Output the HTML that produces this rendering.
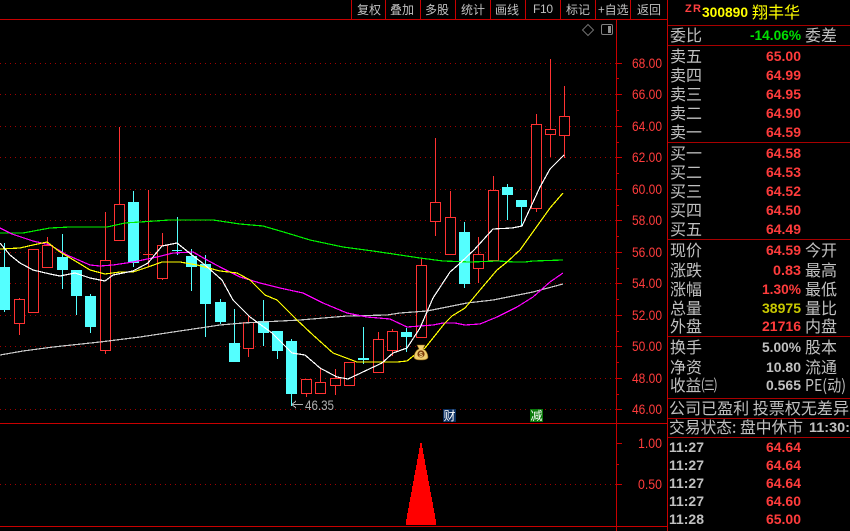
<!DOCTYPE html>
<html><head><meta charset="utf-8"><style>
html,body{margin:0;padding:0;background:#000;width:850px;height:531px;overflow:hidden}
svg{display:block}
.c{font-family:"WenQuanYi Zen Hei","Noto Sans CJK SC",sans-serif;fill:#c0c0c0}
.t{font-size:12px}
.p{font-size:16px}
.n{font-family:"Liberation Sans",sans-serif;font-weight:bold;font-size:14px;fill:#ff3c3c}
.g{fill:#c0c0c0}
.a{font-family:"Liberation Sans",sans-serif;font-size:14px;fill:#ff3c3c}
</style></head><body>
<svg width="850" height="531" viewBox="0 0 850 531" xmlns="http://www.w3.org/2000/svg">
<rect width="850" height="531" fill="#000"/>
<!-- dotted grid -->
<g stroke="#a00000" stroke-width="1" stroke-dasharray="1 4" shape-rendering="crispEdges">
<path d="M0 63.5H616M0 94.5H616M0 126.5H616M0 157.5H616M0 189.5H616M0 220.5H616M0 252.5H616M0 283.5H616M0 315.5H616M0 346.5H616M0 378.5H616M0 409.5H616M0 484.5H616"/>
</g>
<!-- candles -->
<g shape-rendering="crispEdges">
<path fill="none" stroke="#ff3232" d="M19.5 298V335M33.5 249V312M47.5 237V268M105.5 212V354M119.5 127V240M148.5 190V267M143 254.5H153M162.5 233V280M248.5 315V357M306.5 379V397M320.5 369V393M335.5 369V395M349.5 362V386M378.5 332V373M392.5 329V356M421.5 258V337M435.5 138V236M450.5 191V254M478.5 237V283M493.5 176V260M536.5 114V212M550.5 59V157M564.5 86V158"/>
<path fill="#000" stroke="#ff3232" d="M14.5 299.5h10V323.5h-10zM28.5 249.5h10V312.5h-10zM42.5 245.5h10V267.5h-10zM100.5 260.5h10V350.5h-10zM114.5 204.5h10V240.5h-10zM157.5 245.5h10V278.5h-10zM243.5 322.5h10V348.5h-10zM301.5 379.5h10V393.5h-10zM315.5 382.5h10V393.5h-10zM330.5 378.5h10V385.5h-10zM344.5 362.5h10V385.5h-10zM373.5 339.5h10V372.5h-10zM387.5 331.5h10V350.5h-10zM416.5 265.5h10V337.5h-10zM430.5 202.5h10V221.5h-10zM445.5 217.5h10V254.5h-10zM473.5 254.5h10V268.5h-10zM488.5 190.5h10V260.5h-10zM531.5 124.5h10V208.5h-10zM545.5 129.5h10V134.5h-10zM559.5 116.5h10V135.5h-10z"/>
<path fill="none" stroke="#54ffff" d="M4.5 243V312M62.5 234V289M76.5 270V315M90.5 294V333M133.5 191V267M177.5 217V255M172 250.5H182M191.5 249V291M205.5 255V337M220.5 299V324M234.5 309V343M263.5 300V346M277.5 331V359M291.5 339V406M363.5 327V364M406.5 328V352M464.5 222V288M507.5 184V220M521.5 200V226"/>
<path fill="#54ffff" d="M-1 267h11v43h-11zM57 257h11v13h-11zM71 270h11v26h-11zM85 296h11v31h-11zM128 202h11v61h-11zM186 256h11v11h-11zM200 264h11v40h-11zM215 302h11v20h-11zM229 343h11v19h-11zM258 321h11v12h-11zM272 331h11v20h-11zM286 341h11v53h-11zM358 358h11v2h-11zM401 332h11v5h-11zM459 232h11v52h-11zM502 187h11v8h-11zM516 200h11v7h-11z"/>
</g>
<!-- moving averages -->
<g fill="none" stroke-width="1.2" shape-rendering="crispEdges">
<polyline stroke="#c8c8c8" points="0,355 23,351 53,347 100,342 140,337 173,332 200,328 220,325 243,323 300,320 347,316 387,315 400,313 427,311 467,303 493,300 533,292 563,284"/>
<polyline stroke="#00f000" points="0,233 23,233 50,228 70,227 107,227 125,223 155,221 170,220 213,220 240,224 263,226 287,233 310,240 343,247 373,251 400,255 420,258 443,261 470,262 497,261 515,262 525,262 533,261 563,260"/>
<polyline stroke="#ff00ff" points="0,228 12,234 33,241 50,245 67,255 90,265 100,266 113,265 133,262 157,257 173,253 193,252 207,260 220,267 240,277 260,283 280,288 303,293 323,303 347,313 367,317 390,319 407,327 433,325 443,323 455,323 465,325 480,324 497,317 517,307 533,297 550,282 563,273"/>
<polyline stroke="#ffff00" points="0,249 20,248 33,245 47,242 60,252 77,262 90,270 105,274 120,272 133,272 148,267 162,262 180,262 197,265 220,271 237,273 250,280 265,295 277,300 297,320 313,335 333,353 357,362 397,362 407,361 417,353 425,348 445,323 452,316 465,308 480,290 497,270 507,262 520,250 550,208 563,193"/>
<polyline stroke="#ffffff" points="0,243 10,255 20,263 33,270 50,274 60,276 75,273 90,278 105,281 113,275 133,271 148,263 162,246 177,243 192,255 205,265 222,280 233,300 250,317 272,333 292,353 305,355 320,368 337,377 348,379 382,363 393,353 407,348 420,328 433,298 450,272 458,265 474,250 493,229 512,228 522,226 540,187 550,169 564,155"/>
</g>
<!-- low marker -->
<path d="M292 404.5H303M292 404.5L296 401M292 404.5L296 408" stroke="#b0b0b0" fill="none" shape-rendering="crispEdges"/>
<text class="a" x="305" y="410" textLength="29" lengthAdjust="spacingAndGlyphs" style="fill:#b0b0b0">46.35</text>
<!-- money bag -->
<path d="M417 345h8l-2 4c3 1 5 5 5 8 0 2-2 3-7 3s-7-1-7-3c0-3 2-7 5-8z" fill="#f0cf70" stroke="#8a6010" stroke-width=".6"/>
<circle cx="421" cy="354" r="3.6" fill="#7a3a08"/>
<text x="421" y="357" text-anchor="middle" font-family="Liberation Sans,sans-serif" font-size="7" font-weight="bold" fill="#f5d98a">$</text>
<!-- markers -->
<rect x="443" y="409" width="13" height="13" fill="#0c3060"/>
<text class="c" x="443.5" y="420" font-size="12" style="fill:#fff">财</text>
<rect x="530" y="409" width="13" height="13" fill="#0a7a0a"/>
<text class="c" x="530.5" y="420" font-size="12" style="fill:#fff">减</text>
<!-- icons top -->
<path d="M588 24.5L593.5 30 588 35.5 582.5 30z" fill="none" stroke="#707070"/>
<rect x="601.5" y="24.5" width="11" height="10" rx="1.5" fill="#000" stroke="#808080"/>
<rect x="608" y="26" width="3" height="7" fill="#909090" shape-rendering="crispEdges"/>
<!-- frame lines -->
<g stroke="#c80000" shape-rendering="crispEdges" fill="none">
<path d="M0 19.5H667M351.5 0V19M385.5 0V19M420.5 0V19M455.5 0V19M490.5 0V19M525.5 0V19M560.5 0V19M595.5 0V19M630.5 0V19"/>
<path d="M616.5 19V531M667.5 0V531M0 423.5H667M0 526.5H667"/>
<path d="M616 63.5h6M616 94.5h6M616 126.5h6M616 157.5h6M616 189.5h6M616 220.5h6M616 252.5h6M616 283.5h6M616 315.5h6M616 346.5h6M616 378.5h6M616 409.5h6M616 443.5h6M616 484.5h6M616 78.5h3M616 110.5h3M616 142.5h3M616 173.5h3M616 205.5h3M616 236.5h3M616 268.5h3M616 299.5h3M616 331.5h3M616 362.5h3M616 394.5h3M616 464.5h3"/>
<path d="M668 25.5H850M668 45.5H850M668 142.5H850M668 239.5H850M668 336.5H850M668 398.5H850M668 418.5H850M668 437.5H850" stroke="#a80000"/>
</g>
<!-- toolbar -->
<g class="c t">
<text x="357" y="14">复权</text><text x="390" y="14">叠加</text><text x="425" y="14">多股</text><text x="461" y="14">统计</text><text x="495" y="14">画线</text>
<text x="533" y="13" style="font-family:'Liberation Sans',sans-serif" textLength="20">F10</text>
<text x="566" y="14">标记</text><text x="598" y="14">+自选</text><text x="637" y="14">返回</text>
</g>
<!-- axis labels -->
<g class="a">
<text x="632" y="68" textLength="30" lengthAdjust="spacingAndGlyphs">68.00</text>
<text x="632" y="99" textLength="30" lengthAdjust="spacingAndGlyphs">66.00</text>
<text x="632" y="131" textLength="30" lengthAdjust="spacingAndGlyphs">64.00</text>
<text x="632" y="162" textLength="30" lengthAdjust="spacingAndGlyphs">62.00</text>
<text x="632" y="194" textLength="30" lengthAdjust="spacingAndGlyphs">60.00</text>
<text x="632" y="225" textLength="30" lengthAdjust="spacingAndGlyphs">58.00</text>
<text x="632" y="257" textLength="30" lengthAdjust="spacingAndGlyphs">56.00</text>
<text x="632" y="288" textLength="30" lengthAdjust="spacingAndGlyphs">54.00</text>
<text x="632" y="320" textLength="30" lengthAdjust="spacingAndGlyphs">52.00</text>
<text x="632" y="351" textLength="30" lengthAdjust="spacingAndGlyphs">50.00</text>
<text x="632" y="383" textLength="30" lengthAdjust="spacingAndGlyphs">48.00</text>
<text x="632" y="414" textLength="30" lengthAdjust="spacingAndGlyphs">46.00</text>
<text x="638" y="448" textLength="24" lengthAdjust="spacingAndGlyphs">1.00</text>
<text x="638" y="489" textLength="24" lengthAdjust="spacingAndGlyphs">0.50</text>
</g>
<!-- volume triangle -->
<polygon fill="#ff0000" shape-rendering="crispEdges" points="421,443 422,443 422,448 423,448 423,454 424,454 424,459 425,459 425,465 426,465 426,470 427,470 427,475 428,475 428,481 429,481 429,486 430,486 430,492 431,492 431,497 432,497 432,502 433,502 433,508 434,508 434,513 435,513 435,519 436,519 436,525 406,525 406,519 407,519 407,513 408,513 408,508 409,508 409,502 410,502 410,497 411,497 411,492 412,492 412,486 413,486 413,481 414,481 414,475 415,475 415,470 416,470 416,465 417,465 417,459 418,459 418,454 419,454 419,448 420,448 420,443"/>
<!-- header panel -->
<text x="685" y="12" font-family="Liberation Sans,sans-serif" font-size="11" font-weight="bold" fill="#ff4040" textLength="16">ZR</text>
<text x="702" y="17" font-family="Liberation Sans,sans-serif" font-size="14" font-weight="bold" fill="#ffff00" textLength="46" lengthAdjust="spacingAndGlyphs">300890</text>
<text class="c p" x="752" y="18" style="fill:#ffff00">翔丰华</text>
<!-- panel labels -->
<g class="c p">
<text x="670" y="41">委比</text><text x="805" y="41">委差</text>
<text x="670" y="62">卖五</text><text x="670" y="81">卖四</text><text x="670" y="100">卖三</text><text x="670" y="119">卖二</text><text x="670" y="138">卖一</text>
<text x="670" y="159">买一</text><text x="670" y="178">买二</text><text x="670" y="197">买三</text><text x="670" y="216">买四</text><text x="670" y="235">买五</text>
<text x="670" y="256">现价</text><text x="805" y="256">今开</text>
<text x="670" y="276">涨跌</text><text x="805" y="276">最高</text>
<text x="670" y="295">涨幅</text><text x="805" y="295">最低</text>
<text x="670" y="314">总量</text><text x="805" y="314">量比</text>
<text x="670" y="332">外盘</text><text x="805" y="332">内盘</text>
<text x="670" y="353">换手</text><text x="805" y="353">股本</text>
<text x="670" y="373">净资</text><text x="805" y="373">流通</text>
<text x="670" y="391" textLength="47" lengthAdjust="spacingAndGlyphs">收益㈢</text><text x="805" y="391" textLength="41" lengthAdjust="spacingAndGlyphs">PE(动)</text>
<text x="669" y="414" textLength="180" lengthAdjust="spacingAndGlyphs">公司已盈利 投票权无差异</text>
<text x="669" y="433" textLength="134" lengthAdjust="spacingAndGlyphs">交易状态: 盘中休市</text>
</g>
<!-- panel numbers -->
<g class="n">
<text x="750" y="40" textLength="51" lengthAdjust="spacingAndGlyphs" style="fill:#00e000">-14.06%</text>
<text x="766" y="61" textLength="35" lengthAdjust="spacingAndGlyphs">65.00</text>
<text x="766" y="80" textLength="35" lengthAdjust="spacingAndGlyphs">64.99</text>
<text x="766" y="99" textLength="35" lengthAdjust="spacingAndGlyphs">64.95</text>
<text x="766" y="118" textLength="35" lengthAdjust="spacingAndGlyphs">64.90</text>
<text x="766" y="137" textLength="35" lengthAdjust="spacingAndGlyphs">64.59</text>
<text x="766" y="158" textLength="35" lengthAdjust="spacingAndGlyphs">64.58</text>
<text x="766" y="177" textLength="35" lengthAdjust="spacingAndGlyphs">64.53</text>
<text x="766" y="196" textLength="35" lengthAdjust="spacingAndGlyphs">64.52</text>
<text x="766" y="215" textLength="35" lengthAdjust="spacingAndGlyphs">64.50</text>
<text x="766" y="234" textLength="35" lengthAdjust="spacingAndGlyphs">64.49</text>
<text x="766" y="255" textLength="35" lengthAdjust="spacingAndGlyphs">64.59</text>
<text x="773" y="275" textLength="28" lengthAdjust="spacingAndGlyphs">0.83</text>
<text x="762" y="294" textLength="39" lengthAdjust="spacingAndGlyphs">1.30%</text>
<text x="762" y="313" textLength="39" lengthAdjust="spacingAndGlyphs" style="fill:#c8c800">38975</text>
<text x="762" y="331" textLength="39" lengthAdjust="spacingAndGlyphs">21716</text>
<text x="762" y="352" textLength="39" lengthAdjust="spacingAndGlyphs" style="fill:#c0c0c0">5.00%</text>
<text x="766" y="372" textLength="35" lengthAdjust="spacingAndGlyphs" style="fill:#c0c0c0">10.80</text>
<text x="766" y="390" textLength="35" lengthAdjust="spacingAndGlyphs" style="fill:#c0c0c0">0.565</text>
<text x="809" y="432" textLength="41" lengthAdjust="spacingAndGlyphs" style="fill:#c0c0c0">11:30:</text>
<text x="669" y="452" textLength="35" lengthAdjust="spacingAndGlyphs" style="fill:#c0c0c0">11:27</text>
<text x="669" y="470" textLength="35" lengthAdjust="spacingAndGlyphs" style="fill:#c0c0c0">11:27</text>
<text x="669" y="488" textLength="35" lengthAdjust="spacingAndGlyphs" style="fill:#c0c0c0">11:27</text>
<text x="669" y="506" textLength="35" lengthAdjust="spacingAndGlyphs" style="fill:#c0c0c0">11:27</text>
<text x="669" y="524" textLength="35" lengthAdjust="spacingAndGlyphs" style="fill:#c0c0c0">11:28</text>
<text x="766" y="452" textLength="35" lengthAdjust="spacingAndGlyphs">64.64</text>
<text x="766" y="470" textLength="35" lengthAdjust="spacingAndGlyphs">64.64</text>
<text x="766" y="488" textLength="35" lengthAdjust="spacingAndGlyphs">64.64</text>
<text x="766" y="506" textLength="35" lengthAdjust="spacingAndGlyphs">64.60</text>
<text x="766" y="524" textLength="35" lengthAdjust="spacingAndGlyphs">65.00</text>
</g>
</svg>
</body></html>
